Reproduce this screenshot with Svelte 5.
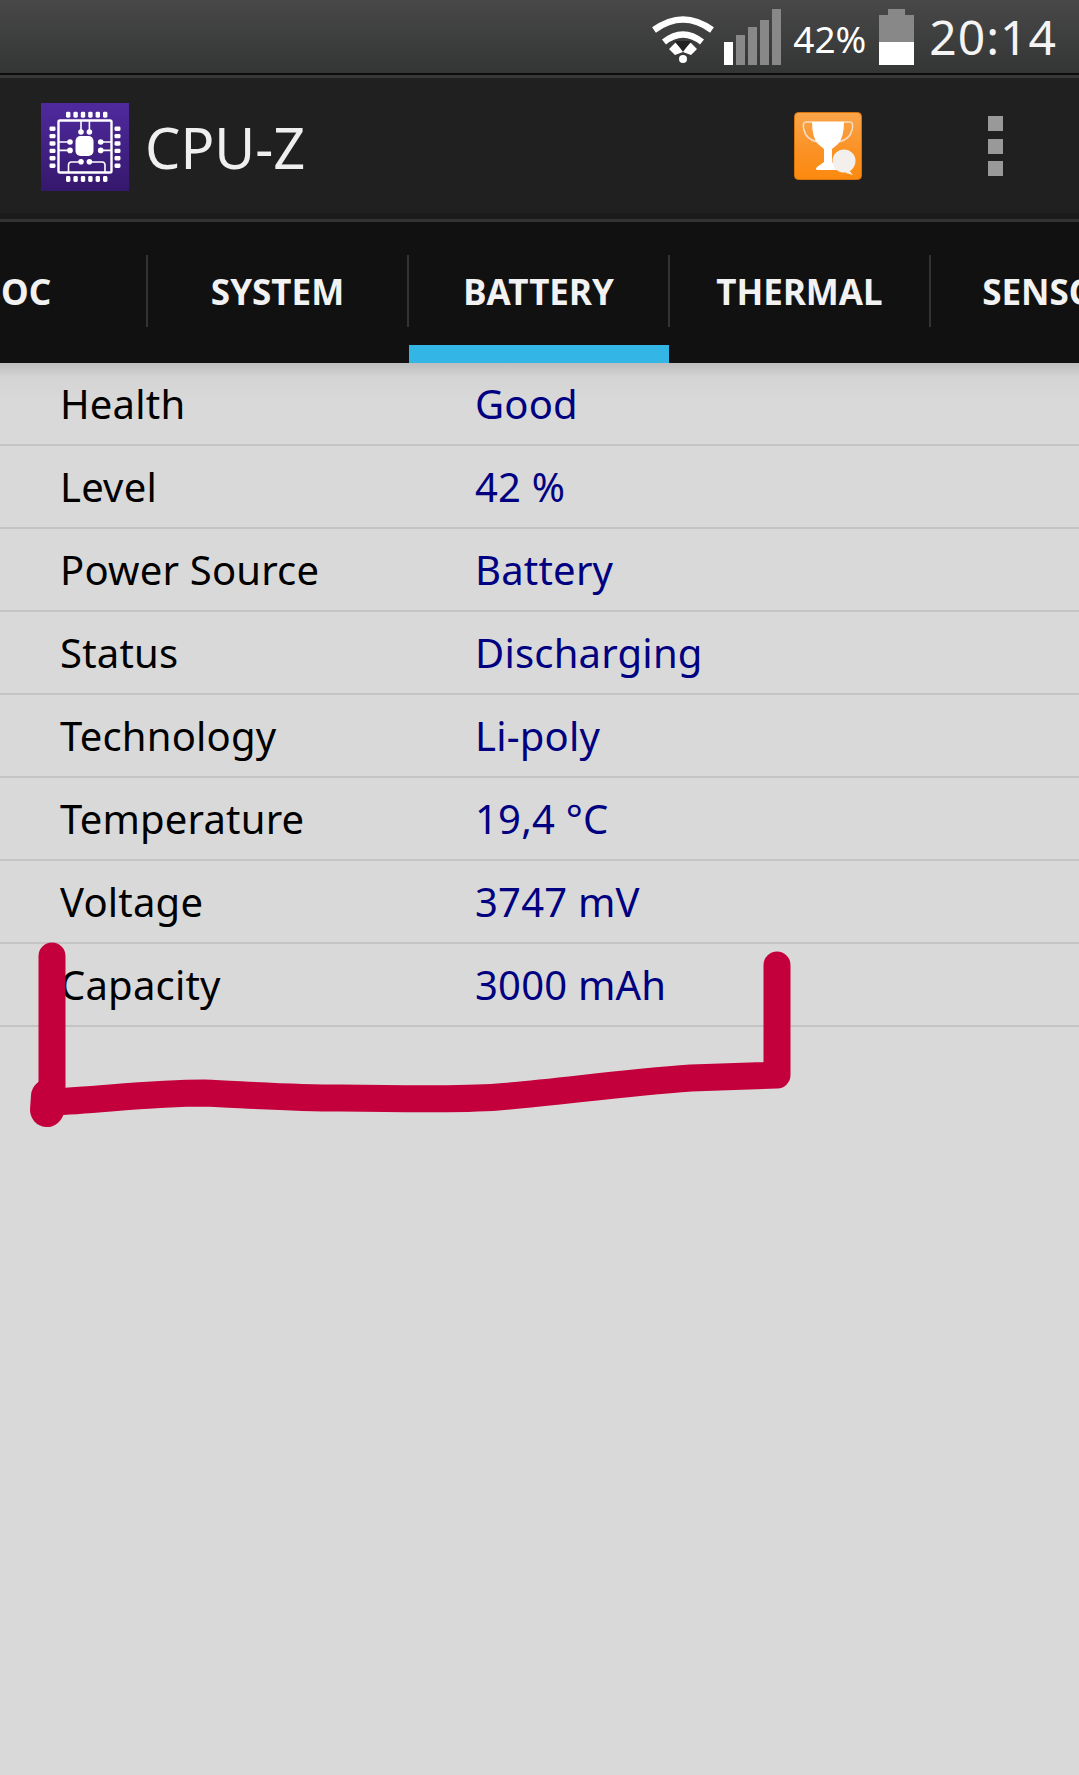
<script>
  const tabs = ['SOC', 'SYSTEM', 'BATTERY', 'THERMAL', 'SENSORS'];
  const rows = [
    ['Health', 'Good'],
    ['Level', '42 %'],
    ['Power Source', 'Battery'],
    ['Status', 'Discharging'],
    ['Technology', 'Li-poly'],
    ['Temperature', '19,4 °C'],
    ['Voltage', '3747 mV'],
    ['Capacity', '3000 mAh']
  ];
  const bars = [23, 30, 38, 45, 56];
  const pinSteps = [0, 1, 2, 3, 4, 5];
</script>

<div class="screen">
  <div class="statusbar">
    <svg class="wifi" width="64" height="50" viewBox="0 0 64 50">
      <path d="M3 15 Q32 -6 61 15" fill="none" stroke="#fff" stroke-width="6.5" />
      <path d="M13 27 Q32 12 51 27" fill="none" stroke="#fff" stroke-width="6.5" />
      <path d="M18 34 L25 27 L32 37 L24 40 Z M46 34 L39 27 L32 37 L40 40 Z" fill="#fff" />
      <path d="M23 26 H41 L32 36 Z" fill="#222" />
      <circle cx="32" cy="44" r="4" fill="#fff" />
    </svg>
    <div class="signal">
      {#each bars as h, i}
        <span class:on={i === 0} style="height: {h}px"></span>
      {/each}
    </div>
    <span class="pct">42%</span>
    <div class="battery">
      <div class="nub"></div>
      <div class="cell"><div class="charge"></div></div>
    </div>
    <span class="clock">20:14</span>
  </div>

  <div class="actionbar">
    <svg class="logo" width="88" height="88" viewBox="0 0 88 88">
      <defs>
        <linearGradient id="purple" x1="0" y1="0" x2="0" y2="1">
          <stop offset="0" stop-color="#4f2a9e" />
          <stop offset="1" stop-color="#35186c" />
        </linearGradient>
      </defs>
      <rect width="88" height="88" fill="url(#purple)" />
      <rect x="17.5" y="17.5" width="53" height="52" rx="1.5" fill="none" stroke="#fff" stroke-width="2.4" />
      <rect x="34.5" y="33" width="18" height="20" rx="5" fill="#fff" />
      {#each pinSteps as p}
        <rect x={25 + p * 7.4} y="8.7" width="4.4" height="6" rx="1.4" fill="#fff" />
        <rect x={25 + p * 7.4} y="73" width="4.4" height="6" rx="1.4" fill="#fff" />
        <rect x="8.5" y={23.5 + p * 7.4} width="6" height="4.4" rx="1.4" fill="#fff" />
        <rect x="73.5" y={23.5 + p * 7.4} width="6" height="4.4" rx="1.4" fill="#fff" />
      {/each}
      <g fill="none" stroke="#fff" stroke-width="1.6">
        <path d="M40 18 V28 M48.4 18 V28" />
        <path d="M18 39 H29 M18 47.4 H29" />
        <path d="M70 39 H60 M70 47.4 H60" />
        <path d="M27.5 69 V62 Q27.5 59 30.5 59 H40 M48.4 59 H61 Q64 59 64 62 V69" />
      </g>
      <g fill="#fff">
        <circle cx="40" cy="29" r="2.8" /><circle cx="48.4" cy="29" r="2.8" />
        <circle cx="29" cy="39" r="2.8" /><circle cx="29" cy="47.4" r="2.8" />
        <circle cx="59.7" cy="39" r="2.8" /><circle cx="59.7" cy="47.4" r="2.8" />
        <circle cx="40" cy="58.7" r="2.8" /><circle cx="48.4" cy="58.7" r="2.8" />
      </g>
    </svg>
    <span class="title">CPU-Z</span>
    <svg class="trophy" width="68" height="68" viewBox="0 0 68 68">
      <defs>
        <linearGradient id="orange" x1="0" y1="0" x2="0" y2="1">
          <stop offset="0" stop-color="#f9a54a" />
          <stop offset="0.55" stop-color="#fb9226" />
          <stop offset="1" stop-color="#fb8a0e" />
        </linearGradient>
      </defs>
      <rect x="0.5" y="0.5" width="67" height="67" rx="4" fill="url(#orange)" stroke="#d9730a" />
      <path d="M18 10 H12 Q8 10 10 18 Q12 27 23 30 M50 10 H56 Q60 10 58 18 Q56 27 45 30" fill="none" stroke="#f6dcc4" stroke-width="1.6" />
      <path d="M18 9.5 H50 Q50 26 44 32 L38 37 V50 L44 56 Q44 57 42 58 H23 Q21 57 23 55 L30 50 V37 L24 32 Q18 26 18 9.5 Z" fill="#fff" />
      <circle cx="50" cy="49" r="11.5" fill="#f2efec" />
      <path d="M54 57 L59 63 L52 61 Z" fill="#f2efec" />
    </svg>
    <div class="overflow">
      <span></span><span></span><span></span>
    </div>
  </div>

  <div class="tabs">
    {#each tabs as tab}
      <div class="tab" class:active={tab === 'BATTERY'}>{tab}</div>
    {/each}
  </div>

  <div class="content">
    {#each rows as [label, value]}
      <div class="row">
        <span class="label">{label}</span>
        <span class="value">{value}</span>
      </div>
    {/each}
  </div>

  <svg class="scribble" width="1079" height="1775" viewBox="0 0 1079 1775">
    <g fill="none" stroke="#c4003c" stroke-linecap="round" stroke-linejoin="round">
      <path d="M52 956 V1100" stroke-width="27" />
      <path d="M48 1096 L47 1110" stroke-width="34" />
      <path
        d="M52 1102 C100 1100 150 1093 204 1093 C250 1095 290 1098 340 1098 C400 1099 460 1100 498 1097 C560 1092 620 1083 691 1078 L777 1075 V965"
        stroke-width="27"
      />
    </g>
  </svg>
</div>

<style>
  :global(body) {
    margin: 0;
    background: #d9d9d9;
  }

  .screen {
    position: relative;
    width: 1079px;
    height: 1775px;
    overflow: hidden;
    background: #d9d9d9;
    font-family: "Noto Sans", sans-serif;
  }

  .statusbar {
    box-sizing: border-box;
    height: 75px;
    display: flex;
    justify-content: flex-end;
    align-items: flex-end;
    padding: 0 22px 8px 0;
    background: linear-gradient(#484848, #343535);
    border-bottom: 2px solid #0c0c0c;
    color: #fff;
  }

  .wifi {
    margin-right: 9px;
  }

  .signal {
    display: flex;
    align-items: flex-end;
    gap: 3px;
    margin-right: 12px;
  }

  .signal span {
    width: 9px;
    background: #888;
  }

  .signal span.on {
    background: #fff;
  }

  .pct {
    font-size: 37px;
    line-height: 48px;
    margin-right: 13px;
    margin-bottom: 2px;
  }

  .battery {
    display: flex;
    flex-direction: column;
    align-items: center;
    margin-right: 15px;
  }

  .nub {
    width: 17px;
    height: 6px;
    background: #888;
  }

  .cell {
    display: flex;
    align-items: flex-end;
    width: 35px;
    height: 50px;
    background: #888;
  }

  .charge {
    width: 100%;
    height: 23px;
    background: #fff;
  }

  .clock {
    font-size: 48px;
    line-height: 58px;
    color: #f4f4f4;
    letter-spacing: 1px;
    margin-bottom: -1px;
  }

  .actionbar {
    box-sizing: border-box;
    height: 147px;
    display: flex;
    align-items: center;
    padding: 0 75px 0 41px;
    background: #202020;
    border-top: 3px solid #383838;
    border-bottom: 3px solid #333;
    box-shadow: inset 0 -6px 0 #1b1b1b;
  }

  .logo {
    flex: none;
    margin-top: -4px;
  }

  .title {
    margin-left: 16px;
    font-size: 56px;
    color: #efefef;
    flex: 1;
    margin-top: -4px;
  }

  .trophy {
    flex: none;
    margin-top: -5px;
    margin-right: 126px;
  }

  .overflow {
    display: flex;
    flex-direction: column;
    gap: 7.5px;
    margin-top: -5px;
    margin-right: 1px;
  }

  .overflow span {
    display: block;
    width: 15px;
    height: 15px;
    background: #999;
  }

  .tabs {
    box-sizing: border-box;
    height: 141px;
    display: flex;
    margin-left: -113px;
    width: 1400px;
    padding-top: 33px;
    background: #111;
  }

  .tab {
    box-sizing: border-box;
    position: relative;
    flex: none;
    width: 261px;
    height: 72px;
    line-height: 74px;
    text-align: center;
    font-size: 35px;
    font-weight: 700;
    color: #f2f2f2;
    border-right: 2px solid #333;
  }

  .tab.active::after {
    content: "";
    position: absolute;
    left: 0;
    right: -1px;
    top: 90px;
    height: 18px;
    background: #33b5e5;
  }

  .content {
    background: linear-gradient(#bdbdbd, #d4d4d4 14px, #d9d9d9 40px);
  }

  .row {
    box-sizing: border-box;
    height: 83px;
    display: flex;
    align-items: center;
    padding-left: 60px;
    border-bottom: 2px solid #c4c4c4;
    font-size: 40px;
    letter-spacing: 0.2px;
  }

  .label {
    width: 415px;
    color: #000;
  }

  .value {
    color: #000080;
  }

  .scribble {
    position: absolute;
    left: 0;
    top: 0;
    pointer-events: none;
  }
</style>
